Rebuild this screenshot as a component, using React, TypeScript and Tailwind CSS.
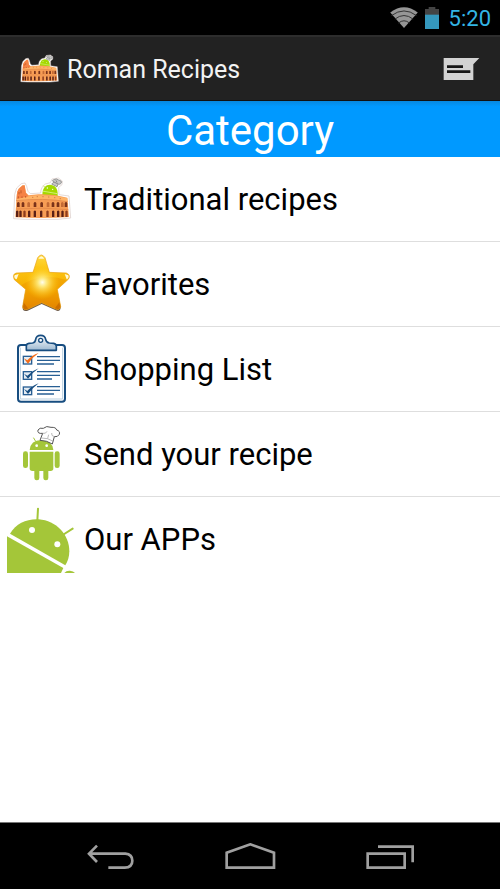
import type { ReactNode } from 'react';

interface IconProps {
	className: string;
	viewBox?: string;
}

const upperArches = [51, 65, 82, 101, 121, 140, 155, 170, 183, 194];
const lowerArches = [48, 58, 70, 84, 101, 120, 139, 156, 171, 184, 196];

const starPath =
	'M113 38 Q124 22 135 38 L148 82 L199 84 Q214 90 205 103 L172 133 L182 184 Q180 198 167 192 L125 173 L83 193 Q68 197 68 184 L77 133 L43 104 Q35 88 49 84 L99 82 Z';

function ColosseumIcon({ className, viewBox = '0 -9 252 252' }: IconProps) {
	return (
		<svg viewBox={viewBox} className={className} aria-hidden="true">
			<path
				d="M41 176 L44 103 L50 84 L64 71 L75 69 L80 79 L84 94 L91 101 L122 99 Q122 82 136 72 L151 68 L156 57 L175 54 L187 63 L186 74 L176 82 L177 104 L207 108 L212 174 L174 178 L76 178 Z"
				fill="#fff"
				stroke="#d8c9c4"
				strokeWidth="2"
				strokeLinejoin="round"
			/>
			<path
				d="M127 106 Q127 83 141 76 Q153 71 164 79 Q174 86 173 108 Z"
				fill="#a5d900"
			/>
			<path d="M130 77 L136 83 M170 80 L174 76" stroke="#a5d900" strokeWidth="2" />
			<path d="M126 93 L172 101" stroke="#e8f7b4" strokeWidth="2" />
			<circle cx="142" cy="84" r="2" fill="#fff" />
			<circle cx="158" cy="88" r="2" fill="#fff" />
			<path
				d="M155 72 L162 66 Q153 62 161 59 Q170 54 176 60 Q187 62 184 69 Q180 75 175 72 L171 80 Z"
				fill="#c8c8c8"
				stroke="#777"
				strokeWidth="2"
			/>
			<path d="M162 66 L174 72 M168 61 L171 67" stroke="#666" strokeWidth="2" />
			<path
				d="M46 172 L50 104 L55 87 L67 76 L74 75 L78 98 L86 106 L115 103 Q158 101 202 113 L207 171 Q130 177 46 172 Z"
				fill="#f79d55"
			/>
			<path
				d="M50 118 L52 94 L60 83 L68 77 L74 77 L77 98 L82 105 L88 113 L50 119 Z"
				fill="#f58245"
			/>
			<path
				d="M86 109 Q145 101 202 115 L203 125 Q137 113 50 123 L51 117 Z"
				fill="#ffb467"
			/>
			<path
				d="M49 147 Q130 141 205 149 M48 122 Q130 113 203 125"
				fill="none"
				stroke="#dd8045"
				strokeWidth="2"
			/>
			{upperArches.map((x, index) => (
				<path
					key={x}
					d={`M${x} 141 v-12 q4 -6 8 0 v12 z`}
					fill={index % 3 === 2 ? '#c46a35' : '#7a3219'}
				/>
			))}
			{lowerArches.map((x, index) => (
				<path
					key={x}
					d={`M${x} 171 v-17 q4 -5 7 0 v17 z`}
					fill={index % 4 === 2 ? '#8e3c1d' : '#5a2015'}
				/>
			))}
			<path
				d="M57 96 v7 M63 91 v9 M55 109 v6 M66 109 v5 M77 108 v5"
				stroke="#c25a2a"
				strokeWidth="3"
			/>
			<path
				d="M96 112 h4 M110 110 h4 M127 110 h4 M144 111 h4 M162 113 h4 M179 116 h4"
				stroke="#d5824a"
				strokeWidth="3"
			/>
		</svg>
	);
}

function StarIcon({ className }: IconProps) {
	return (
		<svg viewBox="0 -9 252 252" className={className} aria-hidden="true">
			<defs>
				<linearGradient id="star-body" x1="0" y1="0" x2="0" y2="1">
					<stop offset="0" stopColor="#ffe04a" />
					<stop offset="0.3" stopColor="#fcc310" />
					<stop offset="0.65" stopColor="#f5ac00" />
					<stop offset="1" stopColor="#d66b00" />
				</linearGradient>
				<radialGradient
					id="star-glow"
					gradientUnits="userSpaceOnUse"
					cx="127"
					cy="112"
					r="52"
				>
					<stop offset="0" stopColor="#fffef0" />
					<stop offset="0.25" stopColor="#fff08a" stopOpacity="0.9" />
					<stop offset="1" stopColor="#ffc800" stopOpacity="0" />
				</radialGradient>
				<clipPath id="star-clip">
					<path d={starPath} />
				</clipPath>
				<clipPath id="star-base">
					<path d="M40 165 H210 V210 H40 Z" />
				</clipPath>
			</defs>
			<g clipPath="url(#star-base)">
				<path d={starPath} fill="#6b5a4c" transform="translate(0 4)" />
			</g>
			<g clipPath="url(#star-clip)">
				<path d="M30 20 H220 V200 H30 Z" fill="url(#star-body)" />
				<path
					d="M48 133 Q112 76 202 106 L176 135 L190 200 H60 Z"
					fill="#ed9600"
					opacity="0.5"
				/>
				<circle cx="127" cy="112" r="52" fill="url(#star-glow)" />
				<path
					d="M70 171 L66 195 L86 193 Z M179 170 L184 195 L163 192 Z"
					fill="#b85b00"
					opacity="0.55"
				/>
				<path
					d="M115 41 Q124 26 133 41 Z M44 91 Q40 100 50 103 L56 87 Z M205 91 Q209 99 200 103 L194 87 Z"
					fill="#fff9d8"
				/>
			</g>
			<path d={starPath} fill="none" stroke="#e8a31a" strokeWidth="2" />
		</svg>
	);
}

function ClipboardIcon({ className }: IconProps) {
	return (
		<svg viewBox="0 -3 252 252" className={className} aria-hidden="true">
			<defs>
				<linearGradient id="clip-metal" x1="0" y1="0" x2="0" y2="1">
					<stop offset="0" stopColor="#fff" />
					<stop offset="1" stopColor="#9db9d1" />
				</linearGradient>
			</defs>
			<rect
				x="54"
				y="51"
				width="141"
				height="170"
				rx="9"
				fill="#fff"
				stroke="#174d80"
				strokeWidth="6"
			/>
			<path d="M61 59 V213 H188 V59" fill="none" stroke="#b9cfdf" strokeWidth="3" />
			<path
				d="M79 67 V54 Q79 47 87 46 L98 45 Q106 43 107 34 Q109 22 122 22 Q135 22 137 34 Q139 44 148 45 L161 46 Q169 48 169 55 V67 Z"
				fill="url(#clip-metal)"
				stroke="#174d80"
				strokeWidth="5"
				strokeLinejoin="round"
			/>
			<circle cx="122" cy="37" r="6" fill="#fff" stroke="#174d80" strokeWidth="4" />
			<g stroke="#285f94" strokeWidth="4">
				<path d="M111 86 H180 M111 97 H180 M111 108 H162" />
				<path d="M111 131 H180 M111 142 H180 M111 153 H156" />
				<path d="M111 176 H180 M111 187 H180 M111 198 H162" />
			</g>
			<g fill="#e5edf4" stroke="#285f94" strokeWidth="4">
				<rect x="70" y="85" width="25" height="23" />
				<rect x="70" y="131" width="25" height="23" />
				<rect x="70" y="177" width="25" height="23" />
			</g>
			<path d="M71 91 L82 97 Q95 82 116 75 Q98 87 84 107 Z" fill="#f36b16" />
			<path d="M72 137 L82 143 Q95 129 116 121 Q97 134 84 152 Z" fill="#174d80" />
			<path d="M72 183 L82 189 Q95 174 116 166 Q97 180 84 198 Z" fill="#174d80" />
		</svg>
	);
}

function ChefIcon({ className }: IconProps) {
	return (
		<svg viewBox="0 -9 252 252" className={className} aria-hidden="true">
			<g fill="#a4c639">
				<path d="M89 105 Q92 75 124 75 Q157 76 160 105 Z" />
				<path d="M89 110 H160 V160 Q160 168 152 168 H97 Q89 168 89 160 Z" />
				<rect x="69" y="109" width="15" height="50" rx="7" />
				<rect x="164" y="109" width="15" height="50" rx="7" />
				<rect x="103" y="155" width="15" height="41" rx="7" />
				<rect x="130" y="155" width="15" height="41" rx="7" />
			</g>
			<path
				d="M101 69 L107 79"
				stroke="#a4c639"
				strokeWidth="3"
				strokeLinecap="round"
			/>
			<circle cx="110" cy="92" r="4" fill="#fff" />
			<circle cx="140" cy="92" r="4" fill="#fff" />
			<path
				d="M120 76 L128 55 Q111 57 114 45 Q119 37 130 40 Q139 31 153 37 Q168 36 170 45 Q181 48 178 58 Q173 67 163 65 L157 87 Q140 76 120 76 Z"
				fill="#fff"
				stroke="#555"
				strokeWidth="3"
				strokeLinejoin="round"
			/>
			<path
				d="M128 55 Q138 57 141 49 M163 65 Q153 63 155 54 M124 69 Q143 68 160 79 M146 59 L143 70"
				fill="none"
				stroke="#999"
				strokeWidth="2"
			/>
		</svg>
	);
}

function TiltedRobotIcon({ className }: IconProps) {
	return (
		<svg viewBox="0 -3 252 252" className={className} aria-hidden="true">
			<g fill="#a4c639">
				<path d="M30 107 C49 76 80 62 116 64 C169 68 208 110 208 160 C208 177 203 190 196 202 Z" />
				<path d="M21 115 L190 210 L183 225 H21 Z" />
				<path d="M193 225 Q199 217 210 218 Q220 219 225 225 Z" />
			</g>
			<path
				d="M114 32 L112 68 M218 92 L188 111"
				stroke="#a4c639"
				strokeWidth="6"
				strokeLinecap="round"
			/>
			<circle cx="96" cy="96" r="9" fill="#fff" />
			<circle cx="172" cy="139" r="9" fill="#fff" />
		</svg>
	);
}

function StatusBar() {
	return (
		<div className="flex h-[35px] items-center justify-end bg-black pr-[9px]">
			<svg viewBox="0 0 84 64" className="mr-[7px] h-[21px] w-7" aria-hidden="true">
				<path d="M42 64 L0 17 Q42 -15 84 17 Z" fill="#969696" />
				<path
					d="M4 26 Q42 -2 80 26 M14 37 Q42 15 70 37 M25 49 Q42 35 59 49"
					fill="none"
					stroke="#333"
					strokeWidth="3"
				/>
			</svg>
			<svg
				viewBox="0 0 42 66"
				className="mr-[10px] h-[22px] w-[14px]"
				aria-hidden="true"
			>
				<path d="M0 6 H11 V0 H31 V6 H42 V66 H0 Z" fill="#444" />
				<path d="M0 23 H42 V66 H0 Z" fill="#3598bd" />
			</svg>
			<span className="pt-0.5 text-[22px] leading-6 text-[#33b5e5]">5:20</span>
		</div>
	);
}

function ActionBar() {
	return (
		<header className="flex h-[66px] items-center border-t-2 border-b border-t-[#2d2d2d] border-b-[#111] bg-[#222] px-5">
			<ColosseumIcon viewBox="38 50 176 132" className="h-[29px] w-[39px]" />
			<h1 className="ml-2 flex-1 pt-0.5 text-[25px] leading-8 text-[#f3f3f3]">
				Roman Recipes
			</h1>
			<button type="button" aria-label="Messages">
				<svg viewBox="0 0 111 72" className="h-6 w-[37px]" aria-hidden="true">
					<path d="M2 3 H109 L91 22 V69 H2 Z" fill="#d3d3d3" />
					<path d="M12 29 H60 M12 44 H82" stroke="#161616" strokeWidth="8" />
				</svg>
			</button>
		</header>
	);
}

interface CategoryRowProps {
	icon: ReactNode;
	label: string;
}

function CategoryRow({ icon, label }: CategoryRowProps) {
	return (
		<li className="border-b border-[#dedede] last:border-b-0">
			<button type="button" className="flex w-full items-center text-left">
				{icon}
				<span className="pt-0.5 text-[31px] leading-9 text-black">{label}</span>
			</button>
		</li>
	);
}

function NavigationBar() {
	return (
		<nav className="flex h-[67px] items-center justify-center gap-[90px] border-t border-[#777] bg-black pt-0.5">
			<button type="button" aria-label="Back">
				<svg viewBox="0 0 147 84" className="h-7 w-[49px]" aria-hidden="true">
					<path
						d="M7 32 H118 Q139 34 139 53 Q139 73 116 74 H67 M33 8 L9 32 L33 57"
						fill="none"
						stroke="#a0a0a0"
						strokeWidth="8"
					/>
				</svg>
			</button>
			<button type="button" aria-label="Home">
				<svg viewBox="0 0 153 84" className="h-7 w-[51px]" aria-hidden="true">
					<path
						d="M5 74 V29 L76 4 L147 29 V74 Z"
						fill="none"
						stroke="#a0a0a0"
						strokeWidth="8"
					/>
				</svg>
			</button>
			<button type="button" aria-label="Recent apps">
				<svg viewBox="0 0 147 84" className="h-7 w-[49px]" aria-hidden="true">
					<path
						d="M5 32 H116 V74 H5 Z M36 11 H140 V58"
						fill="none"
						stroke="#a0a0a0"
						strokeWidth="8"
					/>
				</svg>
			</button>
		</nav>
	);
}

export default function App() {
	const iconSize = 'size-[84px] shrink-0';

	return (
		<div className="flex min-h-screen flex-col bg-white font-['Roboto',sans-serif]">
			<StatusBar />
			<ActionBar />

			<main className="flex-1">
				<h2 className="flex h-14 items-center justify-center bg-[#0099ff] bg-linear-to-b from-[#0788df] to-[#0099ff] to-10% pt-1 text-[42px] leading-[52px] text-white">
					Category
				</h2>
				<ul>
					<CategoryRow
						icon={<ColosseumIcon className={iconSize} />}
						label="Traditional recipes"
					/>
					<CategoryRow icon={<StarIcon className={iconSize} />} label="Favorites" />
					<CategoryRow
						icon={<ClipboardIcon className={iconSize} />}
						label="Shopping List"
					/>
					<CategoryRow
						icon={<ChefIcon className={iconSize} />}
						label="Send your recipe"
					/>
					<CategoryRow
						icon={<TiltedRobotIcon className={iconSize} />}
						label="Our APPs"
					/>
				</ul>
			</main>

			<NavigationBar />
		</div>
	);
}
